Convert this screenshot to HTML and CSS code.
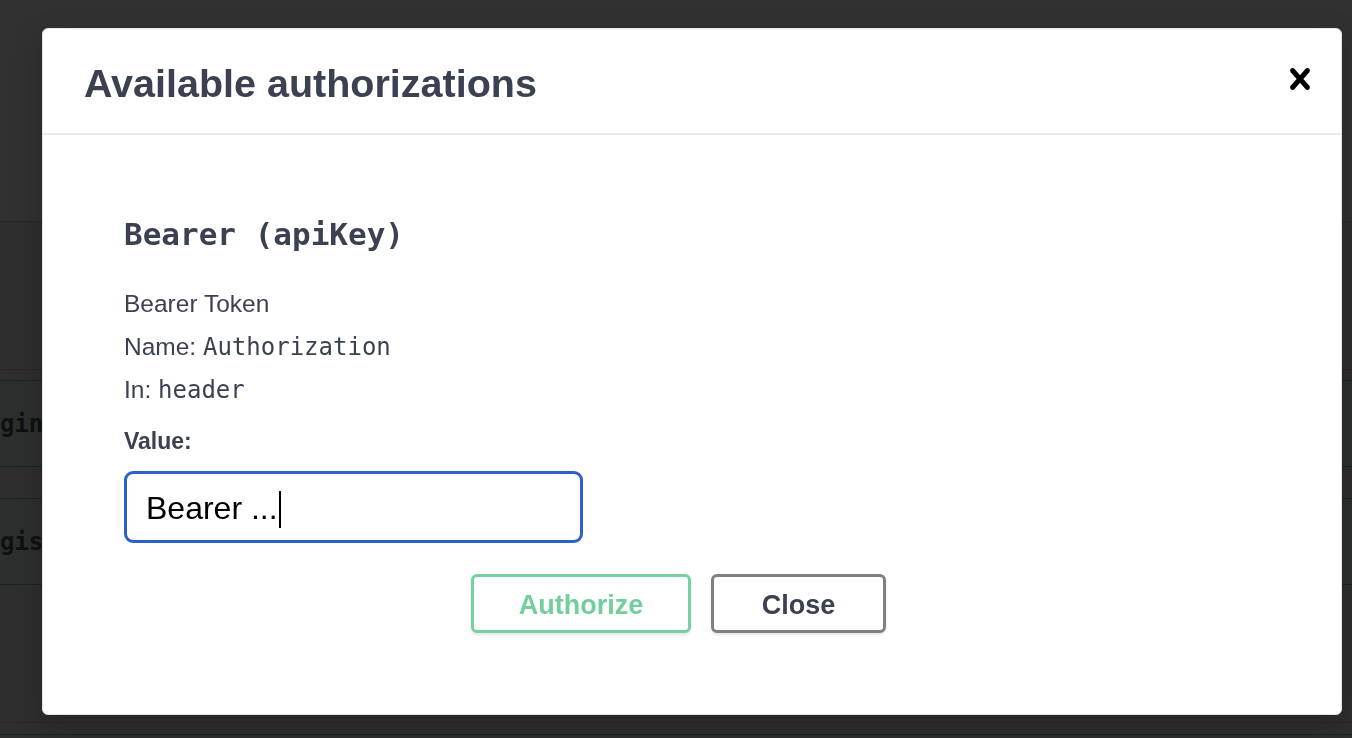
FILE: index.html
```html
<!DOCTYPE html>
<html lang="en">
<head>
<meta charset="utf-8">
<title>Available authorizations</title>
<link rel="stylesheet" href="styles.css">
</head>
<body>
<div class="page">
  <div class="topbar"></div>
  <div class="tag-header"></div>
  <div class="opblock opblock-first"><span class="op-path">login</span></div>
  <div class="opblock"><span class="op-path">register</span></div>
  <div class="tag-header tag-header-second"></div>
  <div class="opblock opblock-last"></div>
</div>

<div class="overlay">
  <div class="modal" role="dialog" aria-labelledby="modal-title">
    <div class="modal-header">
      <h3 id="modal-title" class="modal-title">Available authorizations</h3>
      <button class="close-modal" type="button" aria-label="Close">
        <svg width="42" height="42" viewBox="0 0 20 20" aria-hidden="true"><path d="M14.348 14.849c-.469.469-1.229.469-1.697 0L10 11.819l-2.651 3.029c-.469.469-1.229.469-1.697 0-.469-.469-.469-1.229 0-1.697l2.758-3.15-2.759-3.152c-.469-.469-.469-1.228 0-1.697.469-.469 1.228-.469 1.697 0L10 8.183l2.651-3.031c.469-.469 1.228-.469 1.697 0 .469.469.469 1.229 0 1.697l-2.758 3.152 2.758 3.15c.469.469.469 1.229 0 1.698z"/></svg>
      </button>
    </div>
    <div class="modal-body">
      <h4 class="auth-name">Bearer&nbsp;(apiKey)</h4>
      <div class="auth-info">
        <p>Bearer Token</p>
        <p>Name: <code>Authorization</code></p>
        <p>In: <code>header</code></p>
      </div>
      <label class="value-label">Value:</label>
      <div class="value-input"><span class="value-text">Bearer ...</span><span class="caret"></span></div>
      <div class="btn-row">
        <button class="btn btn-authorize" type="button">Authorize</button>
        <button class="btn btn-close" type="button">Close</button>
      </div>
    </div>
  </div>
</div>
</body>
</html>
```

FILE: styles.css
```css
html, body {
  margin: 0;
  padding: 0;
}

body {
  width: 1352px;
  height: 738px;
  overflow: hidden;
  background: #2e2e2e;
  font-family: "Liberation Sans", Arial, sans-serif;
}

/* ---------- page behind the backdrop ---------- */
.page {
  height: 738px;
  overflow: hidden;
  display: flex;
  flex-direction: column;
}

.topbar {
  flex: none;
  height: 221px;
  background: #313131;
  border-bottom: 1px solid #262626;
}

.tag-header {
  flex: none;
  height: 147px;
  border-bottom: 1px solid #272727;
  margin-bottom: 10px;
}

.tag-header-second {
  height: 137px;
  margin-bottom: 11px;
}

.opblock {
  flex: none;
  height: 85px;
  border-top: 1px solid #14291d;
  border-bottom: 1px solid #14291d;
  background: #2d2f2e;
  display: flex;
  align-items: center;
  overflow: hidden;
}

.opblock-first {
  margin-bottom: 31px;
}

.op-path {
  margin-left: -29px;
  font-family: "DejaVu Sans Mono", monospace;
  font-weight: 700;
  font-size: 24px;
  color: #0f1012;
  white-space: nowrap;
}

/* ---------- modal ---------- */
.overlay {
  position: fixed;
  inset: 0;
  padding: 28px 0 0 42px;
}

.modal {
  width: 1300px;
  box-sizing: border-box;
  background: #fff;
  border: 1px solid #e4e4e4;
  border-radius: 6px;
  box-shadow: 0 10px 30px rgba(0, 0, 0, 0.2);
}

.modal-header {
  height: 104px;
  border-bottom: 2px solid #ebebeb;
  display: flex;
  align-items: center;
  justify-content: space-between;
  padding: 0 20px 0 41px;
}

.modal-title {
  margin: 0;
  font-size: 39.5px;
  line-height: 46px;
  font-weight: 700;
  color: #3b4151;
  padding-top: 4px;
}

.close-modal {
  border: none;
  background: none;
  padding: 0;
  width: 42px;
  height: 42px;
  display: flex;
  margin-top: -4px;
}

.close-modal svg {
  fill: #000;
}

.modal-body {
  padding: 80px 81px 81px 81px;
  display: flex;
  flex-direction: column;
  align-items: flex-start;
}

.auth-name {
  margin: 0;
  font-family: "DejaVu Sans Mono", monospace;
  font-weight: 700;
  font-size: 31px;
  line-height: 38px;
  letter-spacing: 0;
  color: #3b4151;
}

.auth-info {
  margin-top: 29px;
}

.auth-info p {
  margin: 0;
  font-size: 24.5px;
  line-height: 43px;
  height: 43px;
  color: #3b4151;
}

.auth-info code {
  font-family: "DejaVu Sans Mono", monospace;
  font-size: 24px;
  color: #3b4151;
}

.value-label {
  margin-top: 17px;
  font-size: 23px;
  line-height: 26px;
  font-weight: 700;
  color: #3b4151;
}

.value-input {
  margin-top: 17px;
  width: 459px;
  height: 72px;
  box-sizing: border-box;
  border: 3px solid #2c61c8;
  border-radius: 9px;
  padding-left: 19px;
  display: flex;
  align-items: center;
  font-size: 32px;
  color: #000;
}

.value-text {
  padding-top: 2px;
}

.caret {
  width: 2px;
  height: 37px;
  background: #000;
  margin-left: 1px;
  margin-top: 4px;
}

.btn-row {
  align-self: stretch;
  margin-top: 31px;
  display: flex;
  justify-content: center;
  gap: 20px;
  padding-right: 27px;
}

.btn {
  height: 59px;
  box-sizing: border-box;
  border: 3px solid;
  border-radius: 6px;
  background: #fff;
  font-family: "Liberation Sans", Arial, sans-serif;
  font-weight: 700;
  font-size: 27px;
  box-shadow: 0 2px 3px rgba(0, 0, 0, 0.1);
  padding: 4px 0 0;
}

.btn-authorize {
  width: 220px;
  border-color: #76d09f;
  color: #72ce9a;
}

.btn-close {
  width: 175px;
  border-color: #808080;
  color: #3b4151;
}
```
